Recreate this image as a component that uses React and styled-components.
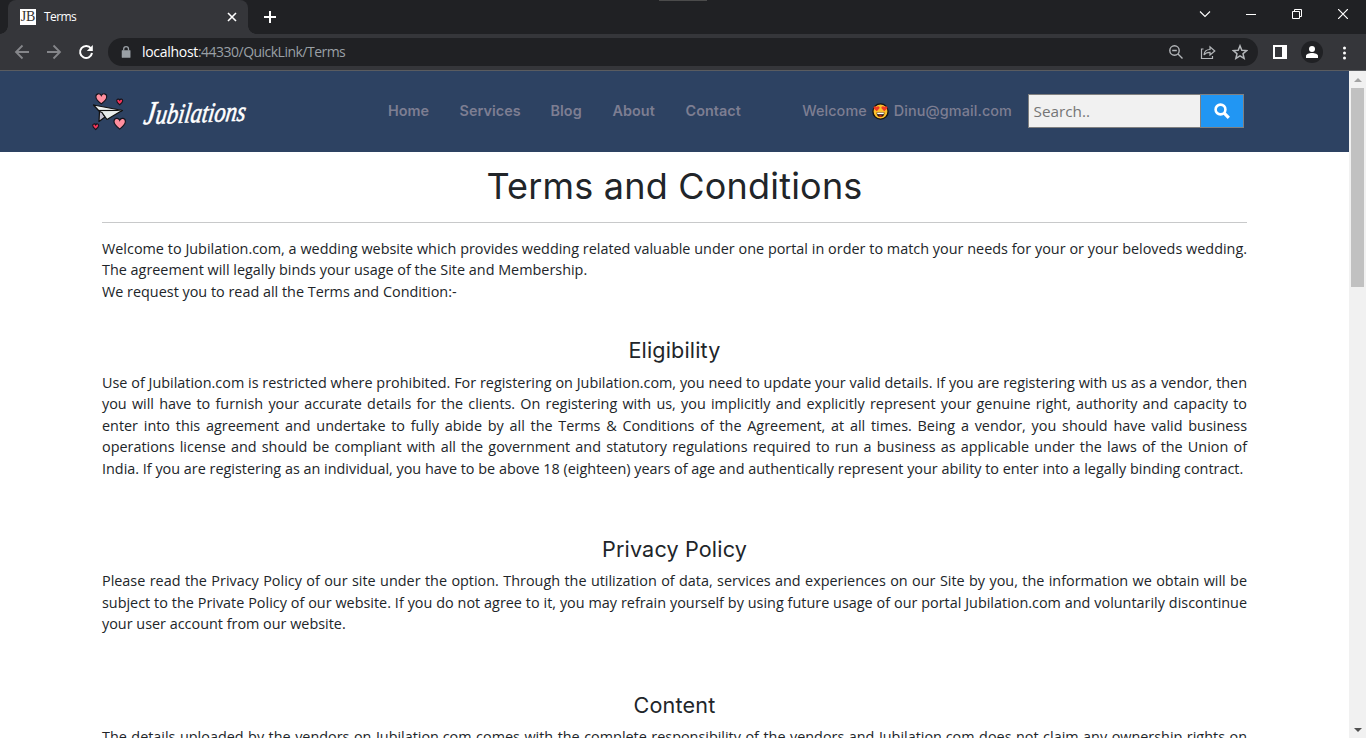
import React from "react";
import styled, { createGlobalStyle } from "styled-components";

const Global = createGlobalStyle`
  *, *::before, *::after { box-sizing: border-box; }
  body { margin: 0; background: #fff; overflow: hidden; }
  h1, h2, p, hr { margin: 0; }
`;

const Window = styled.div`
  width: 1366px;
  height: 738px;
  overflow: hidden;
  display: flex;
  flex-direction: column;
  font-family: "Open Sans", sans-serif;
`;

/* ---------- browser chrome ---------- */

const TabStrip = styled.div`
  position: relative;
  height: 34px;
  flex: none;
  display: flex;
  background: #202124;
  padding-left: 8px;
`;

const TopHandle = styled.div`
  position: absolute;
  left: 659px;
  top: 0;
  width: 48px;
  height: 1px;
  background: #4b4b4b;
`;

const Tab = styled.div`
  position: relative;
  width: 240px;
  height: 34px;
  display: flex;
  align-items: center;
  padding: 0 10px 0 12px;
  border-radius: 8px 8px 0 0;
  background: #35363a;
  color: #fff;
  font-size: 12px;
  &::before, &::after {
    content: "";
    position: absolute;
    bottom: 0;
    width: 8px;
    height: 8px;
  }
  &::before { left: -8px; background: radial-gradient(circle at 0 0, transparent 7.5px, #35363a 8px); }
  &::after { right: -8px; background: radial-gradient(circle at 100% 0, transparent 7.5px, #35363a 8px); }
`;

const Favicon = styled.span`
  width: 16px;
  height: 16px;
  background: #fff;
  color: #333;
  font: 14px/16px "Liberation Serif", serif;
  letter-spacing: -0.2px;
  text-align: center;
  margin-right: 8px;
`;

const TabTitle = styled.span`
  flex: 1;
  letter-spacing: -0.6px;
  padding-bottom: 1px;
`;

const Glyph = styled.svg`
  display: block;
  flex: none;
  width: ${(p) => p.$w || 16}px;
  height: ${(p) => p.$h || p.$w || 16}px;
  fill: none;
  stroke: ${(p) => p.$c || "#fff"};
  stroke-width: ${(p) => p.$s || 1.6};
`;

const NewTab = styled.div`
  width: 44px;
  display: grid;
  place-items: center;
`;

const WindowButtons = styled.div`
  margin-left: auto;
  height: 28px;
  display: flex;
`;

const WindowButton = styled.div`
  width: 46px;
  display: grid;
  place-items: center;
`;

const Toolbar = styled.div`
  height: 37px;
  flex: none;
  display: flex;
  align-items: center;
  background: #35363a;
  border-bottom: 1px solid #5a5c60;
  padding-left: 14px;
`;

const NavButtons = styled.div`
  display: flex;
  gap: 16px;
  margin-right: 14px;
`;

const AddressBar = styled.div`
  flex: none;
  width: 1150px;
  height: 28px;
  border-radius: 14px;
  background: #202124;
  display: flex;
  align-items: center;
  padding: 0 10px;
`;

const Url = styled.span`
  flex: 1;
  margin-left: 8px;
  color: #9aa0a6;
  font-size: 14px;
  letter-spacing: -0.52px;
  padding-bottom: 1px;
  b { color: #fff; font-weight: 400; letter-spacing: -0.3px; }
`;

const AddressActions = styled.div`
  display: flex;
  gap: 16px;
`;

const ToolbarActions = styled.div`
  display: flex;
  align-items: center;
  margin-left: 14px;
`;

const Avatar = styled.div`
  width: 22px;
  height: 22px;
  border-radius: 50%;
  background: #202124;
  display: grid;
  place-items: center;
  margin: 0 16px 0 13px;
`;

/* ---------- page ---------- */

const Viewport = styled.div`
  flex: 1;
  min-height: 0;
  display: flex;
`;

const Page = styled.div`
  width: 1349px;
  overflow: hidden;
  background: #fff;
`;

const Scrollbar = styled.div`
  width: 17px;
  background: #f1f1f1;
  display: flex;
  flex-direction: column;
  align-items: center;
`;

const ScrollArrow = styled.div`
  height: 17px;
  display: grid;
  place-items: center;
`;

const Thumb = styled.div`
  width: 13px;
  height: 199px;
  background: #c1c1c1;
  margin-bottom: auto;
`;

const Header = styled.header`
  height: 81px;
  background: #2d4262;
  display: flex;
  align-items: center;
  padding: 0 105px 1px 90px;
`;

const Brand = styled.div`
  display: flex;
  align-items: center;
  gap: 13px;
  width: 298px;
`;

const Menu = styled.nav`
  display: flex;
  gap: 31px;
  font: 600 14.4px/20px Inter, sans-serif;
  letter-spacing: 0.05px;
`;

const MenuLink = styled.span`
  color: #7d7e92;
  white-space: nowrap;
  width: ${(p) => p.$w}px;
`;

const Greeting = styled.div`
  display: flex;
  align-items: center;
  gap: 5px;
  margin-left: auto;
  font: 500 14.4px/20px Inter, sans-serif;
  letter-spacing: 0.1px;
  color: #7d7e92;
`;

const SearchForm = styled.div`
  display: flex;
  width: 216px;
  height: 34px;
  margin-left: 16px;
  border: 1px solid #808080;
`;

const SearchInput = styled.div`
  width: 171px;
  padding-left: 4.5px;
  background: #f1f1f1;
  color: #757575;
  font-size: 15.3px;
  line-height: 32px;
`;

const SearchButton = styled.div`
  flex: 1;
  border-left: 1px solid #808080;
  background: #2196f3;
  display: grid;
  place-items: center;
`;

const Article = styled.main`
  width: 1145px;
  margin-left: 102px;
  padding-top: 13px;
  color: #212529;
`;

const Title = styled.h1`
  font: 400 36px/43.2px Inter, sans-serif;
  letter-spacing: 0.2px;
  text-align: center;
`;

const Rule = styled.hr`
  border: 0;
  height: 1px;
  margin: 14px 0 14.6px;
  background: #c8c9ca;
`;

const Section = styled.section`
  padding-top: ${(p) => p.$gap || 56.5}px;
`;

const Heading = styled.h2`
  font: 400 21.6px/26px Inter, sans-serif;
  letter-spacing: 0.15px;
  text-align: center;
  margin-bottom: ${(p) => p.$below || 8}px;
`;

const Text = styled.p`
  font-size: 14.4px;
  line-height: 21.6px;
  text-align: justify;
`;

const heart = "M0 6C-2.5 4-6 1.500-6-2-6-5.500-1.500-6.500 0-3.200 1.500-6.500 6-5.500 6-2 6 1.500 2.500 4 0 6Z";

function Logo() {
  return (
    <Brand>
      <svg width="40" height="40" viewBox="0 0 40 40">
        <g stroke="#14141c" strokeWidth="1.200">
          <path transform="translate(11.300 7.500) scale(.9)" d={heart} fill="#ff8f9f" />
          <path transform="translate(29.700 10.700) scale(.5)" d={heart} fill="#f5365c" strokeWidth="2.200" />
          <path transform="translate(29.700 32.300) scale(.95)" d={heart} fill="#ff8f9f" />
          <path transform="translate(5.700 35.500) scale(.5)" d={heart} fill="#f5365c" strokeWidth="2.200" />
        </g>
        <g stroke="#111" strokeWidth="1.200" strokeLinejoin="round">
          <path d="M3.500 14 32.500 19.500 16 26.500 9.500 20.500Z" fill="#eef1f0" />
          <path d="M9 19.500 32 19.500" />
          <path d="M9.500 20.500 9 30.500 15 26 12 21.500Z" fill="#c7c4d2" />
          <path d="M12 21.500 17 28.500 32 19.500" fill="#e9edec" />
        </g>
      </svg>
      <svg width="110" height="44" viewBox="0 0 110 44" overflow="visible">
        <text
          x="6"
          y="35"
          transform="rotate(-2 6 35) skewX(-10)"
          textLength="102"
          lengthAdjust="spacingAndGlyphs"
          fontFamily="'Liberation Serif', serif"
          fontStyle="italic"
          fontSize="28"
          fill="#fff"
          stroke="#fff"
          strokeWidth="0.600"
        >
          <tspan fontSize="33">J</tspan>ubilations
        </text>
      </svg>
    </Brand>
  );
}

function HeartEyes() {
  return (
    <svg width="17" height="17" viewBox="0 0 17 17">
      <circle cx="8.500" cy="8.500" r="7.600" fill="#fcbf2c" stroke="#17130f" strokeWidth="1.400" />
      <path d="M4.800 8.300 1.700 5.600C1 3.600 3 2.600 4.500 4 6 2.300 8 3.500 7.500 5.300Z" fill="#f03a25" />
      <path d="M12.200 8.300 15.300 5.600C16 3.600 14 2.600 12.500 4 11 2.300 9 3.500 9.500 5.300Z" fill="#f03a25" />
      <path d="M4.500 9.500h8c0 6-8 6-8 0Z" fill="#24150c" />
      <path d="M5.200 9.700h6.600v1.500H5.200Z" fill="#fff" />
      <path d="M6.500 13q2-1.500 4 0-2 1.500-4 0Z" fill="#f03a25" />
    </svg>
  );
}

function Chrome() {
  return (
    <>
      <TabStrip>
        <TopHandle />
        <Tab>
          <Favicon>JB</Favicon>
          <TabTitle>Terms</TabTitle>
          <Glyph $w={12} viewBox="0 0 12 12"><path d="m2 2 8 8M10 2 2 10" /></Glyph>
        </Tab>
        <NewTab>
          <Glyph $w={12} $s={2} viewBox="0 0 12 12"><path d="M6 0v12M0 6h12" /></Glyph>
        </NewTab>
        <WindowButtons>
          <WindowButton><Glyph $w={12} $s={1.1} viewBox="0 0 12 12"><path d="m1 3.500 5 5 5-5" /></Glyph></WindowButton>
          <WindowButton><Glyph $w={10} $s={1} viewBox="0 0 10 10"><path d="M0 5.500h10" /></Glyph></WindowButton>
          <WindowButton><Glyph $w={10} $s={1} viewBox="0 0 10 10"><path d="M.5 2.500h7v7h-7zM2.500 2.500v-2h7v7h-2" /></Glyph></WindowButton>
          <WindowButton><Glyph $w={10} $s={1.2} viewBox="0 0 10 10"><path d="m0 0 10 10M10 0 0 10" /></Glyph></WindowButton>
        </WindowButtons>
      </TabStrip>
      <Toolbar>
        <NavButtons>
          <Glyph $c="#85868a" $s={1.8} viewBox="0 0 16 16"><path d="M15 8H2m6.500-6.500L2 8l6.500 6.500" /></Glyph>
          <Glyph $c="#85868a" $s={1.8} viewBox="0 0 16 16"><path d="M1 8h13M7.500 1.500 14 8l-6.500 6.500" /></Glyph>
          <Glyph $s={2} viewBox="0 0 16 16"><path d="M13 4.500A6 6 0 1 0 14 9" /><path d="M14.800 1v6h-6z" fill="#fff" stroke="none" /></Glyph>
        </NavButtons>
        <AddressBar>
          <Glyph viewBox="0 0 16 16">
            <path d="M4 6.500h8.200v7H4z" fill="#9aa0a6" stroke="#9aa0a6" strokeWidth="0.500" />
            <path d="M5.700 6.500V5a2.400 2.400 0 0 1 4.800 0v1.500" stroke="#9aa0a6" strokeWidth="1.300" />
          </Glyph>
          <Url><b>localhost</b>:44330/QuickLink/Terms</Url>
          <AddressActions>
            <Glyph $c="#b4b7ba" $s={1.4} viewBox="0 0 16 16"><circle cx="6.500" cy="6.500" r="4.700" /><path d="M4.200 6.500h4.600M10 10l4.500 4.500" /></Glyph>
            <Glyph $c="#b4b7ba" $s={1.2} viewBox="0 0 16 16"><path d="M3.500 5h-2v9.500h11V12M4 11c.3-4 2.500-5.500 6-5.500V2.800L14.800 7 10 11V8.300c-3 0-4.700.7-6 2.700Z" /></Glyph>
            <Glyph $c="#b4b7ba" $s={1.5} viewBox="0 0 16 16"><path d="m8 1.800 1.800 4.400 4.800.4-3.600 3.100 1.100 4.600L8 11.800l-4.100 2.500L5 9.700 1.400 6.600l4.800-.4Z" /></Glyph>
          </AddressActions>
        </AddressBar>
        <ToolbarActions>
          <Glyph $w={16} viewBox="0 0 16 16"><path d="M2 2h12v12H2z" strokeWidth="2" /><path d="M10 2h4v12h-4z" fill="#fff" stroke="none" /></Glyph>
          <Avatar>
            <Glyph $w={12} viewBox="0 0 12 12"><g fill="#fff" stroke="none"><circle cx="6" cy="3" r="3" /><path d="M0 12V10c0-4 12-4 12 0v2z" /></g></Glyph>
          </Avatar>
          <Glyph $w={15} viewBox="0 0 15 15"><g fill="#fff" stroke="none"><circle cx="5.500" cy="3" r="1.500" /><circle cx="5.500" cy="8" r="1.500" /><circle cx="5.500" cy="13" r="1.500" /></g></Glyph>
        </ToolbarActions>
      </Toolbar>
    </>
  );
}

export default function App() {
  return (
    <Window>
      <Global />
      <Chrome />
      <Viewport>
        <Page>
          <Header>
            <Logo />
            <Menu>
              <MenuLink $w={40.5}>Home</MenuLink>
              <MenuLink $w={60}>Services</MenuLink>
              <MenuLink $w={31}>Blog</MenuLink>
              <MenuLink $w={42}>About</MenuLink>
              <MenuLink $w={57}>Contact</MenuLink>
            </Menu>
            <Greeting>
              <span>Welcome</span>
              <HeartEyes />
              <span>Dinu@gmail.com</span>
            </Greeting>
            <SearchForm>
              <SearchInput>Search..</SearchInput>
              <SearchButton>
                <Glyph $w={16} $s={2.6} viewBox="0 0 16 16"><circle cx="6.500" cy="6.500" r="4.900" /><path d="m10.200 10.200 4.600 4.600" strokeWidth="3.200" /></Glyph>
              </SearchButton>
            </SearchForm>
          </Header>
          <Article>
            <Title>Terms and Conditions</Title>
            <Rule />
            <Text>
              Welcome to Jubilation.com, a wedding website which provides wedding related valuable under one portal in
              order to match your needs for your or your beloveds wedding. The agreement will legally binds your usage
              of the Site and Membership.
              <br />
              We request you to read all the Terms and Condition:-
            </Text>
            <Section $gap={34.4}>
              <Heading $below={8.6}>Eligibility</Heading>
              <Text>
                Use of Jubilation.com is restricted where prohibited. For registering on Jubilation.com, you need to
                update your valid details. If you are registering with us as a vendor, then you will have to furnish
                your accurate details for the clients. On registering with us, you implicitly and explicitly represent
                your genuine right, authority and capacity to enter into this agreement and undertake to fully abide by
                all the Terms &amp; Conditions of the Agreement, at all times. Being a vendor, you should have valid
                business operations license and should be compliant with all the government and statutory regulations
                required to run a business as applicable under the laws of the Union of India. If you are registering
                as an individual, you have to be above 18 (eighteen) years of age and authentically represent your
                ability to enter into a legally binding contract.
              </Text>
            </Section>
            <Section>
              <Heading>Privacy Policy</Heading>
              <Text>
                Please read the Privacy Policy of our site under the option. Through the utilization of data, services
                and experiences on our Site by you, the information we obtain will be subject to the Private Policy of
                our website. If you do not agree to it, you may refrain yourself by using future usage of our portal
                Jubilation.com and voluntarily discontinue your user account from our website.
              </Text>
            </Section>
            <Section $gap={57.3}>
              <Heading>Content</Heading>
              <Text>
                The details uploaded by the vendors on Jubilation.com comes with the complete responsibility of the
                vendors and Jubilation.com does not claim any ownership rights on
                the content.
              </Text>
            </Section>
          </Article>
        </Page>
        <Scrollbar>
          <ScrollArrow><Glyph $w={8} $h={4} viewBox="0 0 8 4"><path d="M0 4 4 0l4 4z" fill="#a3a3a3" stroke="none" /></Glyph></ScrollArrow>
          <Thumb />
          <ScrollArrow><Glyph $w={8} $h={4} viewBox="0 0 8 4"><path d="M0 0h8L4 4z" fill="#505050" stroke="none" /></Glyph></ScrollArrow>
        </Scrollbar>
      </Viewport>
    </Window>
  );
}
